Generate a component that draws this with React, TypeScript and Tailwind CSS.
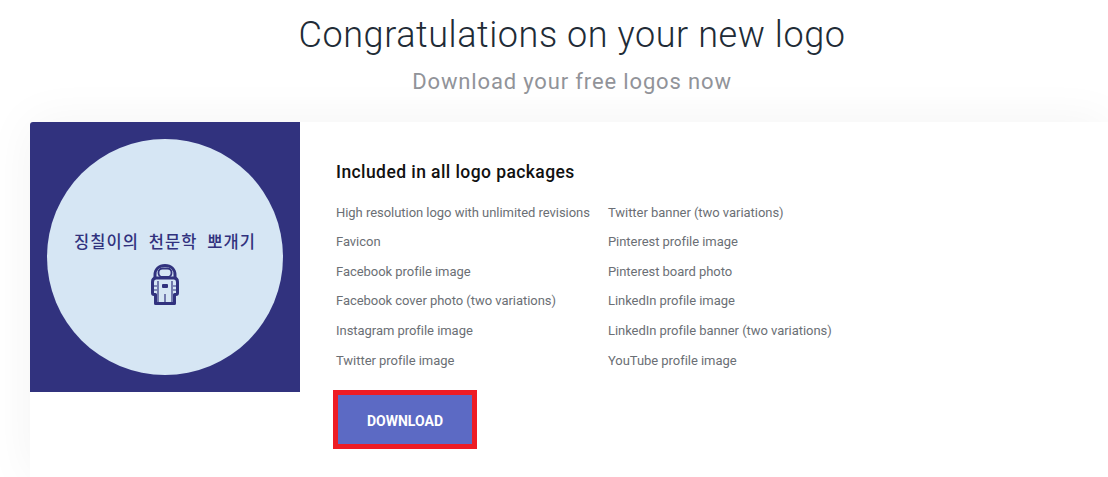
const LEFT_ITEMS = [
  "High resolution logo with unlimited revisions",
  "Favicon",
  "Facebook profile image",
  "Facebook cover photo (two variations)",
  "Instagram profile image",
  "Twitter profile image",
]

const RIGHT_ITEMS = [
  "Twitter banner (two variations)",
  "Pinterest profile image",
  "Pinterest board photo",
  "LinkedIn profile image",
  "LinkedIn profile banner (two variations)",
  "YouTube profile image",
]

function Astronaut() {
  return (
    <svg width="28" height="41" viewBox="0 0 28 41" fill="none" className="block">
      <path d="M4 14V11C4 5 8 1.5 14 1.5C20 1.5 24 5 24 11V14" stroke="#31327e" strokeWidth="3" />
      <rect x="7.5" y="4.5" width="13" height="8.5" rx="4" stroke="#31327e" strokeWidth="1.8" />
      <path
        d="M5 14H23C25.5 14 26.5 16 26.5 18V29C26.5 30 26 30.5 25 30.5H23.5V39.5H4.5V30.5H3C2 30.5 1.5 30 1.5 29V18C1.5 16 2.5 14 5 14Z"
        stroke="#31327e"
        strokeWidth="3"
        strokeLinejoin="round"
      />
      <rect x="11" y="20" width="6" height="4" rx="1" fill="#31327e" />
      <path d="M7 17V38M21 17V38M14 30V38" stroke="#31327e" strokeWidth="1.2" />
      <path d="M2 22H6M2 26H6M22 22H26M22 26H26" stroke="#31327e" strokeWidth="1" />
    </svg>
  )
}

function ItemColumn({ items }: { items: string[] }) {
  return (
    <ul className="flex flex-col gap-[11px]">
      {items.map((item) => (
        <li key={item} className="h-[18.6px] text-[13px] leading-[18.6px] tracking-[-0.04px] whitespace-nowrap text-[#6b6f75]">
          {item}
        </li>
      ))}
    </ul>
  )
}

export default function App() {
  return (
    <div className="h-[477px] w-[1108px] overflow-hidden bg-white font-['Roboto',sans-serif]">
      <div className="h-[122px] pt-[12px] pl-[36px] text-center">
        <h1 className="text-[36px] leading-[46px] font-light tracking-[0.57px] text-[#212b36]">Congratulations on your new logo</h1>
        <p className="mt-[10px] text-[22px] leading-[28px] tracking-[0.85px] text-[#919399]">Download your free logos now</p>
      </div>
      <div className="ml-[30px] flex h-[355px] rounded-tl-[3px] bg-white shadow-[0_0_50px_rgba(0,0,0,0.05)]">
        <div className="flex h-[270px] w-[270px] shrink-0 items-center justify-center rounded-tl-[3px] bg-[#31327e]">
          <div className="flex h-[236px] w-[236px] flex-col items-center rounded-full bg-[#d6e6f4] pt-[91px]">
            <span className="font-['Noto_Sans_CJK_KR',sans-serif] text-[16.5px] leading-[22px] font-medium tracking-[1.1px] whitespace-pre text-[#31327e]">
              징칠이의  천문학  뽀개기
            </span>
            <div className="mt-[12px]">
              <Astronaut />
            </div>
          </div>
        </div>
        <div className="pt-[38px] pl-[36px]">
          <h2 className="text-[17.5px] leading-[24px] font-medium tracking-[0.42px] text-[#111]">Included in all logo packages</h2>
          <div className="mt-[19.7px] flex gap-[18px]">
            <ItemColumn items={LEFT_ITEMS} />
            <ItemColumn items={RIGHT_ITEMS} />
          </div>
          <button className="mt-[19.3px] -ml-[3px] flex h-[59px] w-[144px] items-center justify-center border-[5px] border-[#ed1c24] bg-[#5c6ac4] pt-[4px] text-[14px] font-bold text-white">
            DOWNLOAD
          </button>
        </div>
      </div>
    </div>
  )
}
